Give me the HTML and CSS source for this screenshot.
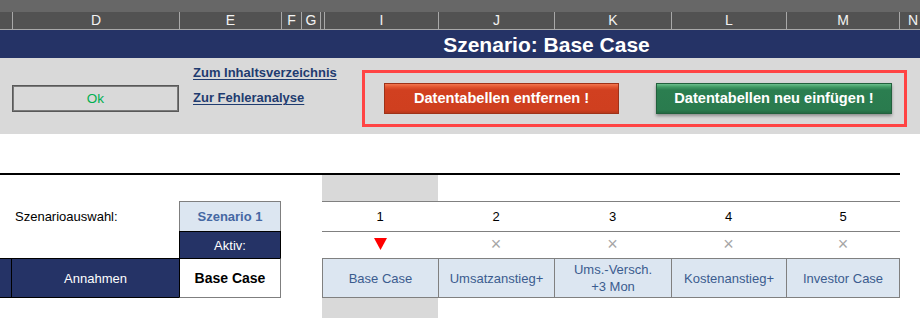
FILE: index.html
```html
<!doctype html>
<html lang="de">
  <head>
    <meta charset="utf-8" />
    <title>Szenario: Base Case</title>
    <link rel="stylesheet" href="styles.css">
  </head>
  <body>
    <div class="topbar"></div>

    <div class="colheads">
      <div class="ch ch_c"></div>
      <div class="ch ch_d">D</div>
      <div class="ch ch_e">E</div>
      <div class="ch ch_f">F</div>
      <div class="ch ch_g">G</div>
      <div class="ch ch_h"></div>
      <div class="ch ch_i">I</div>
      <div class="ch ch_j">J</div>
      <div class="ch ch_k">K</div>
      <div class="ch ch_l">L</div>
      <div class="ch ch_m">M</div>
      <div class="ch ch_n">N</div>
    </div>

    <div class="title">Szenario: Base Case</div>

    <div class="band">
      <div class="ok_box">Ok</div>
      <div class="links">
        <a href="#">Zum Inhaltsverzeichnis</a>
        <a href="#">Zur Fehleranalyse</a>
      </div>
      <div class="btn_frame">
        <div class="btn btn_red">Datentabellen entfernen !</div>
        <div class="btn btn_green">Datentabellen neu einfügen !</div>
      </div>
    </div>

    <div class="spacer"></div>
    <div class="rule"></div>

    <div class="sheet">
      <!-- row 1 -->
      <div class="cell gray col_i"></div>

      <!-- row 2 -->
      <div class="cell label r2">Szenarioauswahl:</div>
      <div class="cell scen_box r2">Szenario 1</div>
      <div class="cell num r2 c5">1</div>
      <div class="cell num r2 c6">2</div>
      <div class="cell num r2 c7">3</div>
      <div class="cell num r2 c8">4</div>
      <div class="cell num r2 c9">5</div>

      <!-- row 3 -->
      <div class="cell aktiv r3">Aktiv:</div>
      <div class="cell mark r3 c5">
        <svg width="13" height="12" viewBox="0 0 13 12"><polygon points="0,0 13,0 6.5,12" fill="#ff0000" /></svg>
      </div>
      <div class="cell mark r3 c6"><span class="cross">×</span></div>
      <div class="cell mark r3 c7"><span class="cross">×</span></div>
      <div class="cell mark r3 c8"><span class="cross">×</span></div>
      <div class="cell mark r3 c9"><span class="cross">×</span></div>

      <!-- row 4 -->
      <div class="cell navy_edge r4"></div>
      <div class="cell annahmen r4">Annahmen</div>
      <div class="cell base_box r4">Base Case</div>
      <div class="cell case r4 c5">Base Case</div>
      <div class="cell case r4 c6">Umsatzanstieg+</div>
      <div class="cell case r4 c7">Ums.-Versch.<br>+3 Mon</div>
      <div class="cell case r4 c8">Kostenanstieg+</div>
      <div class="cell case r4 c9 last">Investor Case</div>

      <!-- row 5 -->
      <div class="cell gray col_i r5"></div>
    </div>
  </body>
</html>
```

FILE: styles.css
```css
body {
  margin: 0;
  font-family: "Liberation Sans", Arial, sans-serif;
  font-size: 13px;
  color: #000;
  background: #fff;
  width: 920px;
  height: 318px;
  overflow: hidden;
}

.topbar {
  height: 12px;
  background-color: #676767;
}

/* spaltenkoepfe */
.colheads {
  display: flex;
  height: 17px;
  background-color: #525252;
  border-bottom: 1px solid #a8a8a8;
}

.ch {
  box-sizing: border-box;
  border-right: 1px solid #a8a8a8;
  color: #f2f2f2;
  font-size: 14px;
  line-height: 16px;
  text-align: center;
}
.ch_c { width: 13px; }
.ch_d { width: 167px; }
.ch_e { width: 102px; }
.ch_f { width: 20px; }
.ch_g { width: 19px; }
.ch_h { width: 4px; }
.ch_i { width: 114px; }
.ch_j { width: 116px; }
.ch_k { width: 117px; }
.ch_l { width: 115px; }
.ch_m { width: 113px; }
.ch_n { flex: 1; border-right: none; text-align: left; padding-left: 8px; }

.title {
  height: 28px;
  background-color: #253366;
  color: #fff;
  font-size: 21px;
  font-weight: bold;
  line-height: 29px;
  text-align: center;
  padding-left: 179px;
  padding-right: 6px;
}

/* grauer bereich mit buttons */
.band {
  display: flex;
  align-items: flex-start;
  height: 76px;
  background-color: #d9d9d9;
}

.ok_box {
  box-sizing: border-box;
  width: 167px;
  height: 27px;
  margin-left: 12px;
  margin-top: 27px;
  border: 1px solid #595959;
  box-shadow: inset 0 0 0 1px #7a7a7a;
  color: #00b050;
  font-size: 13.5px;
  text-align: center;
  line-height: 25px;
}

.links {
  display: flex;
  flex-direction: column;
  width: 169px;
  margin-left: 14px;
  margin-top: 2px;
}

.links a {
  color: #1f3c70;
  font-weight: bold;
  font-size: 13px;
  line-height: 25px;
  text-decoration: underline;
  text-decoration-thickness: 1px;
  text-underline-offset: 2px;
  white-space: nowrap;
}

.btn_frame {
  box-sizing: border-box;
  display: flex;
  align-items: flex-start;
  gap: 37px;
  width: 545px;
  height: 57px;
  margin-top: 12px;
  padding-left: 19px;
  padding-top: 10px;
  border: 3px solid #ff4444;
}

.btn {
  box-sizing: border-box;
  height: 31px;
  color: #fff;
  font-weight: bold;
  font-size: 14.6px;
  line-height: 29px;
  text-align: center;
}

.btn_red {
  width: 235px;
  background: linear-gradient(#f2764f 0, #e2552f 3px, #d14020 6px, #cf3f1f 26px, #a8331a 31px);
  border: 1px solid #9e3218;
}

.btn_green {
  width: 236px;
  background: linear-gradient(#6cbf8c 0, #3f9a63 3px, #2b7e50 6px, #2a7b4e 26px, #1f5e3a 31px);
  border: 1px solid #22613d;
  box-shadow: 0 2px 3px rgba(0, 0, 0, 0.35);
}

.spacer {
  height: 39px;
}

.rule {
  width: 900px;
  height: 2px;
  background-color: #000;
}

/* tabelle */
.sheet {
  display: grid;
  grid-template-columns: 12px 167px 102px 41px 116px 116px 117px 115px 114px 1fr;
  grid-template-rows: 26px 30px 27px 40px 21px;
}

.cell {
  box-sizing: border-box;
  display: flex;
  align-items: center;
  justify-content: center;
  text-align: center;
}

.gray {
  background-color: #d9d9d9;
}
.col_i { grid-column: 5; grid-row: 1; }
.r5 { grid-row: 5; }

.r2 { grid-row: 2; }
.r3 { grid-row: 3; }
.r4 { grid-row: 4; }
.c5 { grid-column: 5; }
.c6 { grid-column: 6; }
.c7 { grid-column: 7; }
.c8 { grid-column: 8; }
.c9 { grid-column: 9; }

.label {
  grid-column: 2;
  justify-content: flex-start;
  padding-left: 3px;
}

.scen_box {
  grid-column: 3;
  background-color: #dce6f1;
  border: 1px solid #7f7f7f;
  border-bottom: none;
  color: #4568a3;
  font-weight: bold;
}

.num {
  border-top: 1px solid #808080;
}

.aktiv {
  grid-column: 3;
  background-color: #253366;
  color: #fff;
  border: 1px solid #000;
  border-bottom: none;
}

.mark {
  border-top: 1px solid #808080;
  padding-bottom: 2px;
}

.cross {
  color: #a6a6a6;
  font-size: 18px;
  line-height: 16px;
}

.navy_edge {
  grid-column: 1;
  background-color: #253366;
  border-top: 1px solid #000;
  border-bottom: 1px solid #000;
  border-right: 1px solid #000;
}

.annahmen {
  grid-column: 2;
  background-color: #253366;
  color: #fff;
  border-top: 1px solid #000;
  border-bottom: 1px solid #000;
}

.base_box {
  grid-column: 3;
  background-color: #fff;
  border-left: 1px solid #000;
  border-top: 1px solid #000;
  border-right: 1px solid #7f7f7f;
  border-bottom: 1px solid #7f7f7f;
  font-weight: bold;
  font-size: 14px;
}

.case {
  background-color: #dce6f1;
  color: #3b5c8f;
  border-top: 1px solid #808080;
  border-bottom: 1px solid #808080;
  border-left: 1px solid #808080;
  line-height: 17px;
}
.case.last {
  border-right: 1px solid #808080;
}
```
